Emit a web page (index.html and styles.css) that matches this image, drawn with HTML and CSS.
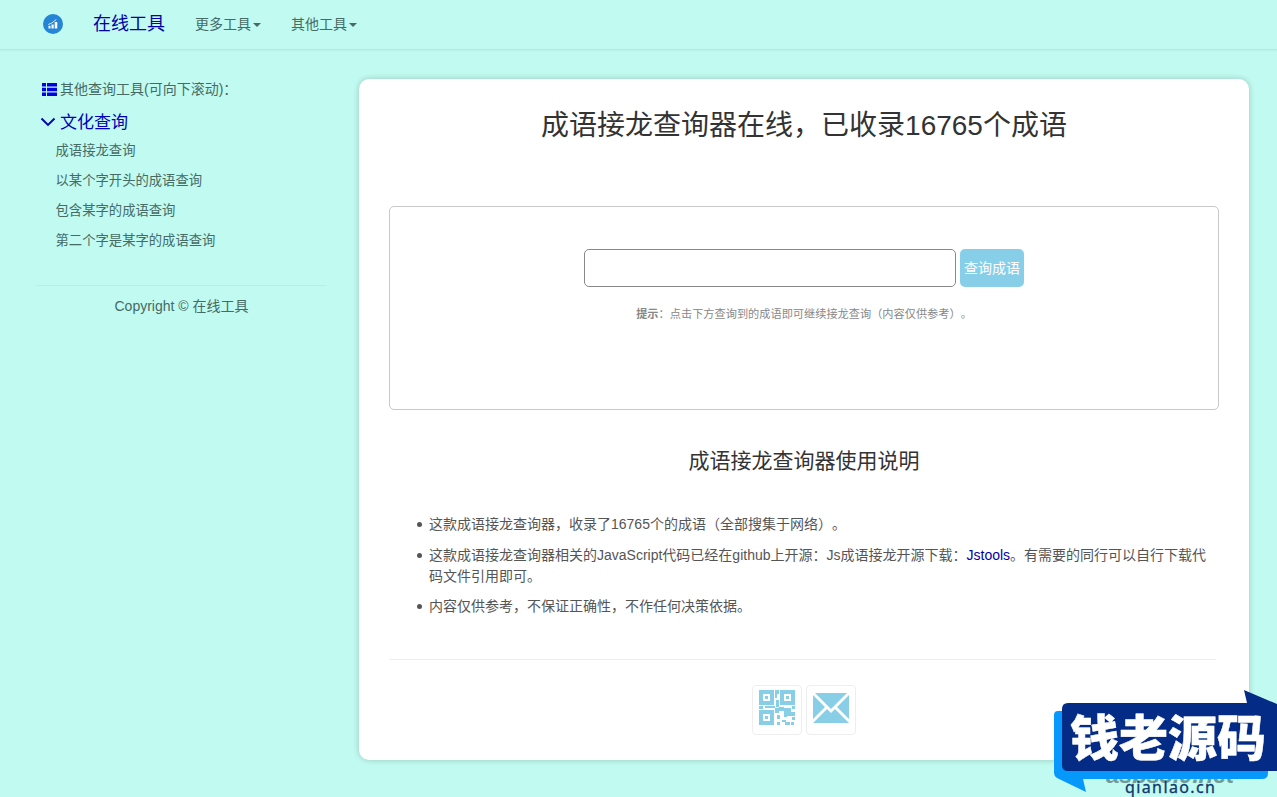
FILE: index.html
```
<!DOCTYPE html>
<html lang="zh-CN">
<head>
<meta charset="utf-8">
<title>成语接龙查询器</title>
<link rel="stylesheet" href="styles.css">
</head>
<body>
<header class="navbar">
  <svg class="logo" viewBox="0 0 20 20"><circle cx="10" cy="10" r="10" fill="#2484d6"/><path d="M5.500 11.800h2V14.500H5.500zM8.500 10.500h2.200v4H8.500zM11.700 8h2.600v6.500h-2.600z" fill="#fff"/><path d="M5.300 10.500l3.500-1.500 4.500-3.500" stroke="#d5ecff" fill="none" stroke-width="1"/></svg>
  <a class="brand">在线工具</a>
  <a class="nav-item">更多工具<i class="caret"></i></a>
  <a class="nav-item">其他工具<i class="caret"></i></a>
</header>
<div class="layout">
  <aside class="sidebar">
    <div class="side-title"><svg class="list-icon" viewBox="0 0 15 13"><path d="M0 0h4v3.500H0zM5 0h10v3.500H5zM0 4.700h4v3.500H0zM5 4.700h10v3.500H5zM0 9.500h4V13H0zM5 9.500h10V13H5z" fill="#0000e0"/></svg>其他查询工具(可向下滚动)：</div>
    <div class="side-group"><svg class="chevron" viewBox="0 0 16 10"><path d="M1.500 1.500L8 8l6.500-6.500" fill="none" stroke="#0000b8" stroke-width="1.900"/></svg>文化查询</div>
    <ul class="side-list">
      <li>成语接龙查询</li>
      <li>以某个字开头的成语查询</li>
      <li>包含某字的成语查询</li>
      <li>第二个字是某字的成语查询</li>
    </ul>
    <div class="copyright">Copyright © 在线工具</div>
  </aside>
  <main class="card">
    <h1 class="title">成语接龙查询器在线，已收录16765个成语</h1>
    <section class="query">
      <div class="query-row"><input class="query-input" type="text"><button class="query-button">查询成语</button></div>
      <p class="tip"><b>提示</b>：点击下方查询到的成语即可继续接龙查询（内容仅供参考）。</p>
    </section>
    <h2 class="subtitle">成语接龙查询器使用说明</h2>
    <ul class="notes">
      <li>这款成语接龙查询器，收录了16765个的成语（全部搜集于网络）。</li>
      <li>这款成语接龙查询器相关的JavaScript代码已经在github上开源：Js成语接龙开源下载：<a class="link">Jstools</a>。有需要的同行可以自行下载代码文件引用即可。</li>
      <li>内容仅供参考，不保证正确性，不作任何决策依据。</li>
    </ul>
    <div class="contacts">
      <span class="contact"><svg viewBox="0 0 36 36" width="36" height="36" fill="#87cee6"><path fill-rule="evenodd" d="M0 0h15v15H0zM4 4v7h7V4zM21 0h15v15H21zM25 4v7h7V4zM0 20h15v15H0zM4 24v7h7v-7z"/><path d="M6 6h3v3H6zM27 6h3v3h-3zM6 26h3v3H6zM16 0h4v4h-2v4h-2zM17 10h3v7h-3zM0 16h4v3H0zM6 16h10v2H6zM16 18h4v5h-4zM20 17h5v4h-5zM25 18h3v9h-3zM28 18h4v4h4v4h-8zM33 16h3v3h-3zM18 25h3v4h-3zM18 32h3v3h-3zM23 30h4v2h-4zM26 32h5v3h-5zM33 27h3v3h-3zM32 32h3v3h-3z"/></svg></span>
      <span class="contact"><svg viewBox="0 0 36 30" width="36" height="30" fill="#87cee6"><path d="M2 0h32L18 16zM0 2l12 12L0 26zM36 2v24L24 14zM0 30l14-14 4 4 4-4 14 14z"/></svg></span>
    </div>
  </main>
</div>
<div class="watermark">
  <svg width="223" height="109" viewBox="0 0 223 109">
    <text class="wm-ghost" x="52" y="93" textLength="128">asbs5.0.net</text>
    <path d="M4 21h204q6 0 6 7v55q0 6-6 6H29l3 13L3 88q-3-2-3-5V25q0-4 4-4z" fill="#0798fb"/>
    <path d="M14 13h179l-3-13 33 14v67H14q-6 0-6-6V19q0-6 6-6z" fill="#042c86"/>
    <text class="wm-name" x="16" y="66" textLength="196">钱老源码</text>
    <text class="wm-site" x="71" y="103" textLength="90">qianlao.cn</text>
  </svg>
</div>
</body>
</html>
```
FILE: styles.css
```
* { box-sizing: border-box; }
body { margin: 0; height: 797px; overflow: hidden; position: relative; background: #c0faf0; color: #555; font: 14px/21px "Liberation Sans", "Noto Sans CJK SC", sans-serif; text-spacing-trim: space-all; }
ul { margin: 0; padding: 0; }
h1, h2, p { margin: 0; font-weight: 400; }
.navbar { height: 50px; padding-left: 43px; display: flex; align-items: center; border-bottom: 1px solid #b2e9df; box-shadow: 0 1px 2px rgba(0,0,0,.04); color: #456b65; padding-bottom: 2px; }
.logo { width: 20px; height: 20px; margin-right: 30px; }
.brand { width: 102px; padding-top: 2px; font-size: 18px; color: #0000a8; }
.nav-item { width: 96px; padding-top: 1px; display: flex; align-items: center; }
.caret { border: 4px solid transparent; border-top-color: currentColor; border-bottom: 0; margin-left: 2px; margin-top: 2px; }
.layout { display: flex; align-items: flex-start; padding-top: 29px; }
.sidebar { width: 327px; margin-right: 32px; color: #466a64; }
.side-title { display: flex; align-items: center; padding-left: 42px; height: 20px; white-space: nowrap; }
.list-icon { width: 15px; height: 13px; margin-right: 3px; }
.side-group { display: flex; align-items: center; padding-left: 40px; height: 26px; margin-top: 10px; font-size: 17px; color: #0000b8; }
.chevron { width: 16px; height: 10px; margin-right: 4px; }
.side-list { list-style: none; padding: 1px 0 0 55.500px; font-size: 13.330px; line-height: 30px; }
.copyright { margin: 29px 0 0 36px; border-top: 1px solid #c8e6e3; padding-top: 10px; text-align: center; }
.card { width: 890px; height: 681px; padding: 26px 30px 0; border-radius: 10px; background: #fff; box-shadow: 0 0 6px rgba(0,0,0,.2); }
.title { font-size: 28px; line-height: 42px; text-align: center; color: #333; }
.query { height: 204px; margin-top: 59px; padding-top: 42px; border: 1px solid #c9c9c9; border-radius: 5px; }
.query-row { display: flex; justify-content: center; gap: 4px; }
.query-input { width: 372px; height: 38px; border: 1px solid #888; border-radius: 5px; background: #fff; }
.query-button { width: 64px; height: 38px; padding: 0; border: 0; border-radius: 5px; background: #87cee9; color: #fff; font: inherit; }
.tip { margin-top: 17px; text-align: center; font-size: 11.200px; color: #888; }
.subtitle { margin-top: 35px; font-size: 21px; line-height: 32px; text-align: center; color: #333; }
.notes { list-style: none; margin-top: 37px; padding-left: 40px; height: 146px; border-bottom: 1px solid #eee; margin-right: 3px; }
.notes li { margin-bottom: 9.500px; margin-right: -3px; }
.notes li::before { content: ""; display: inline-block; width: 5px; height: 5px; margin: 0 7px 0 -12px; border-radius: 50%; background: #555; vertical-align: 2px; }
.link { color: #0000a8; }
.contacts { display: flex; justify-content: center; gap: 4px; margin-top: 25px; }
.contact { width: 50px; height: 50px; display: flex; align-items: center; justify-content: center; padding-bottom: 4px; border: 1px solid #eee; border-radius: 4px; }
.watermark { position: absolute; left: 1054px; top: 690px; }
.watermark svg { display: block; }
.wm-name { font: 900 49px "Noto Sans CJK SC", sans-serif; fill: #fff; stroke: #fff; stroke-width: .5; }
.wm-ghost { font: italic bold 24px "Liberation Sans", sans-serif; fill: #719b96; }
.wm-site { font: 16px "Noto Sans", sans-serif; fill: #12366e; stroke: #12366e; stroke-width: .3; }
```
